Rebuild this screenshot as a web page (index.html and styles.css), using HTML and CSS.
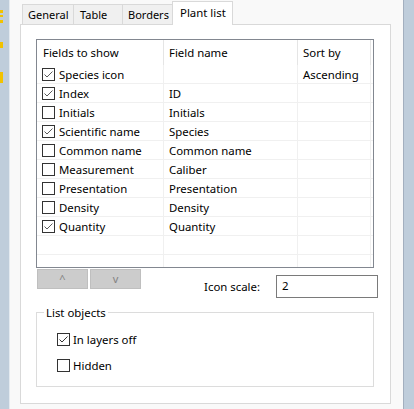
FILE: index.html
```html
<!DOCTYPE html>
<html>
<head>
<meta charset="utf-8">
<link rel="stylesheet" href="styles.css">
</head>
<body>
<div class="window">
  <div class="strip-left">
    <div class="mark mark-a"></div>
    <div class="mark mark-b"></div>
    <div class="mark mark-c"></div>
    <div class="mark mark-d"></div>
    <div class="mark mark-e"></div>
  </div>
  <div class="main">
    <div class="tabs">
      <div class="tab tab-general">General</div>
      <div class="tab tab-table">Table</div>
      <div class="tab tab-borders">Borders</div>
      <div class="tab tab-plant selected">Plant list</div>
    </div>
    <div class="page">
      <div class="listview">
        <div class="lv-head">
          <div class="cell c1">Fields to show</div>
          <div class="cell c2">Field name</div>
          <div class="cell c3">Sort by</div>
          <div class="cell c4"></div>
        </div>
        <div class="lv-body">
          <div class="lv-row">
            <div class="cell c1"><svg class="cb" width="13" height="13" viewBox="0 0 13 13"><rect x="0.5" y="0.5" width="12" height="12" fill="#fff" stroke="#333"/><polyline points="2.5,6.5 5,9 10.5,3.5" fill="none" stroke="#5a5a5a" stroke-width="1"/></svg><span class="lbl">Species icon</span></div>
            <div class="cell c2"></div>
            <div class="cell c3">Ascending</div>
            <div class="cell c4"></div>
          </div>
          <div class="lv-row">
            <div class="cell c1"><svg class="cb" width="13" height="13" viewBox="0 0 13 13"><rect x="0.5" y="0.5" width="12" height="12" fill="#fff" stroke="#333"/><polyline points="2.5,6.5 5,9 10.5,3.5" fill="none" stroke="#5a5a5a" stroke-width="1"/></svg><span class="lbl">Index</span></div>
            <div class="cell c2">ID</div>
            <div class="cell c3"></div>
            <div class="cell c4"></div>
          </div>
          <div class="lv-row">
            <div class="cell c1"><svg class="cb" width="13" height="13" viewBox="0 0 13 13"><rect x="0.5" y="0.5" width="12" height="12" fill="#fff" stroke="#333"/></svg><span class="lbl">Initials</span></div>
            <div class="cell c2">Initials</div>
            <div class="cell c3"></div>
            <div class="cell c4"></div>
          </div>
          <div class="lv-row">
            <div class="cell c1"><svg class="cb" width="13" height="13" viewBox="0 0 13 13"><rect x="0.5" y="0.5" width="12" height="12" fill="#fff" stroke="#333"/><polyline points="2.5,6.5 5,9 10.5,3.5" fill="none" stroke="#5a5a5a" stroke-width="1"/></svg><span class="lbl">Scientific name</span></div>
            <div class="cell c2">Species</div>
            <div class="cell c3"></div>
            <div class="cell c4"></div>
          </div>
          <div class="lv-row">
            <div class="cell c1"><svg class="cb" width="13" height="13" viewBox="0 0 13 13"><rect x="0.5" y="0.5" width="12" height="12" fill="#fff" stroke="#333"/></svg><span class="lbl">Common name</span></div>
            <div class="cell c2">Common name</div>
            <div class="cell c3"></div>
            <div class="cell c4"></div>
          </div>
          <div class="lv-row">
            <div class="cell c1"><svg class="cb" width="13" height="13" viewBox="0 0 13 13"><rect x="0.5" y="0.5" width="12" height="12" fill="#fff" stroke="#333"/></svg><span class="lbl">Measurement</span></div>
            <div class="cell c2">Caliber</div>
            <div class="cell c3"></div>
            <div class="cell c4"></div>
          </div>
          <div class="lv-row">
            <div class="cell c1"><svg class="cb" width="13" height="13" viewBox="0 0 13 13"><rect x="0.5" y="0.5" width="12" height="12" fill="#fff" stroke="#333"/></svg><span class="lbl">Presentation</span></div>
            <div class="cell c2">Presentation</div>
            <div class="cell c3"></div>
            <div class="cell c4"></div>
          </div>
          <div class="lv-row">
            <div class="cell c1"><svg class="cb" width="13" height="13" viewBox="0 0 13 13"><rect x="0.5" y="0.5" width="12" height="12" fill="#fff" stroke="#333"/></svg><span class="lbl">Density</span></div>
            <div class="cell c2">Density</div>
            <div class="cell c3"></div>
            <div class="cell c4"></div>
          </div>
          <div class="lv-row">
            <div class="cell c1"><svg class="cb" width="13" height="13" viewBox="0 0 13 13"><rect x="0.5" y="0.5" width="12" height="12" fill="#fff" stroke="#333"/><polyline points="2.5,6.5 5,9 10.5,3.5" fill="none" stroke="#5a5a5a" stroke-width="1"/></svg><span class="lbl">Quantity</span></div>
            <div class="cell c2">Quantity</div>
            <div class="cell c3"></div>
            <div class="cell c4"></div>
          </div>
          <div class="lv-row">
            <div class="cell c1"></div>
            <div class="cell c2"></div>
            <div class="cell c3"></div>
            <div class="cell c4"></div>
          </div>
          <div class="lv-row">
            <div class="cell c1"></div>
            <div class="cell c2"></div>
            <div class="cell c3"></div>
            <div class="cell c4"></div>
          </div>
        </div>
      </div>
      <div class="controls">
        <div class="btn btn-up">^</div>
        <div class="btn btn-down">v</div>
        <div class="spacer"></div>
        <div class="scale-label">Icon scale:</div>
        <div class="input">2</div>
      </div>
      <div class="group">
        <div class="group-title">List objects</div>
        <div class="g-row g-row1"><svg class="gcb" width="13" height="13" viewBox="0 0 13 13"><rect x="0.5" y="0.5" width="12" height="12" fill="#fff" stroke="#333"/><polyline points="2.5,6.5 5,9 10.5,3.5" fill="none" stroke="#333" stroke-width="1"/></svg><span class="glbl">In layers off</span></div>
        <div class="g-row g-row2"><svg class="gcb" width="13" height="13" viewBox="0 0 13 13"><rect x="0.5" y="0.5" width="12" height="12" fill="#fff" stroke="#333"/></svg><span class="glbl">Hidden</span></div>
      </div>
    </div>
  </div>
  <div class="strip-right"></div>
</div>
</body>
</html>
```

FILE: styles.css
```css
* { box-sizing: border-box; }
html, body { margin: 0; padding: 0; }
body {
  width: 414px;
  height: 409px;
  overflow: hidden;
  font-family: "Noto Sans", "Open Sans", sans-serif;
  font-size: 11.4px;
  color: #000;
  background: #f5f5f5;
}
.window { display: flex; width: 414px; height: 409px; }

.strip-left {
  width: 10px;
  flex: none;
  background: #bfcddb;
  border-right: 1px solid #e4eaf0;
  display: flex;
  flex-direction: column;
}
.mark { width: 3px; background: #f2c200; flex: none; }
.mark-a { margin-top: 10px; height: 3px; }
.mark-b { margin-top: 2px; height: 2px; }
.mark-c { margin-top: 3px; height: 3px; }
.mark-d { margin-top: 19px; height: 6px; }
.mark-e { margin-top: 24px; height: 11px; }

.strip-right {
  width: 11px;
  flex: none;
  background: #bfcddb;
  border-left: 1px solid #a3afbf;
}

.main {
  width: 393px;
  flex: none;
  background: #f9f9f9;
  padding-left: 10px;
}

.tabs {
  display: flex;
  align-items: flex-end;
  height: 24px;
  padding-left: 2px;
  font-size: 11px;
}
.tab {
  height: 20px;
  border: 1px solid #d9d9d9;
  border-bottom: none;
  background: #f0f0f0;
  line-height: 19px;
  padding-left: 5px;
  margin-left: -1px;
  white-space: nowrap;
  overflow: hidden;
}
.tab-general { width: 52px; margin-left: 0; }
.tab-table { width: 50px; padding-left: 6px; }
.tab-borders { width: 51px; }
.tab.selected {
  width: 61px;
  height: 24px;
  line-height: 22px;
  padding-left: 7px;
  background: #fff;
  margin-bottom: -1px;
  position: relative;
  z-index: 1;
  font-size: 11.4px;
}

.page {
  width: 371px;
  height: 380px;
  border: 1px solid #d9d9d9;
  background: #fff;
  padding: 14px 14px 0 15px;
}

.listview {
  width: 338px;
  height: 229px;
  border: 1px solid #828790;
  overflow: hidden;
}
.lv-head { display: flex; height: 25px; line-height: 25px; }
.lv-head .cell { border-right: 1px solid #e5e5e5; padding-left: 5px; }
.lv-head .c1 { padding-left: 6px; }
.lv-head .c4 { border-right: none; }

.cell { flex: none; white-space: nowrap; overflow: hidden; }
.c1 { width: 127px; }
.c2 { width: 134px; }
.c3 { width: 73px; }
.c4 { width: 2px; }

.lv-row {
  display: flex;
  height: 19px;
  border-bottom: 1px solid #f0f0f0;
}
.lv-row .cell {
  display: flex;
  align-items: center;
  padding-top: 1px;
  padding-left: 5px;
  border-right: 1px solid #f0f0f0;
  line-height: 16px;
}
.lv-row .c4 { border-right: none; padding-left: 0; }
.cb { flex: none; display: block; }
.lbl { margin-left: 4px; }

.controls {
  display: flex;
  align-items: flex-start;
  margin-top: 1px;
  height: 29px;
}
.btn {
  width: 51px;
  height: 20px;
  background: #cccccc;
  border: 1px solid #bfbfbf;
  color: #838383;
  text-align: center;
  line-height: 18px;
  font-size: 11px;
}
.btn-up { margin-left: 1px; }
.btn-down { margin-left: 2px; }
.spacer { flex: 1; }
.scale-label {
  margin-top: 10px;
  line-height: 15px;
  margin-right: 16px;
}
.input {
  width: 102px;
  height: 23px;
  border: 1px solid #7a7a7a;
  margin-top: 6px;
  padding-left: 5px;
  line-height: 20px;
  margin-right: -2px;
}

.group {
  width: 338px;
  height: 75px;
  margin-top: 14px;
  border: 1px solid #dcdcdc;
}
.group-title {
  display: table;
  margin: -8px 0 0 7px;
  padding: 0 2px;
  background: #fff;
  line-height: 15px;
}
.g-row {
  display: flex;
  align-items: center;
  height: 13px;
  margin-left: 20px;
  margin-top: 13px;
  line-height: 15px;
}
.gcb { flex: none; display: block; }
.glbl { margin-left: 3px; }
```
